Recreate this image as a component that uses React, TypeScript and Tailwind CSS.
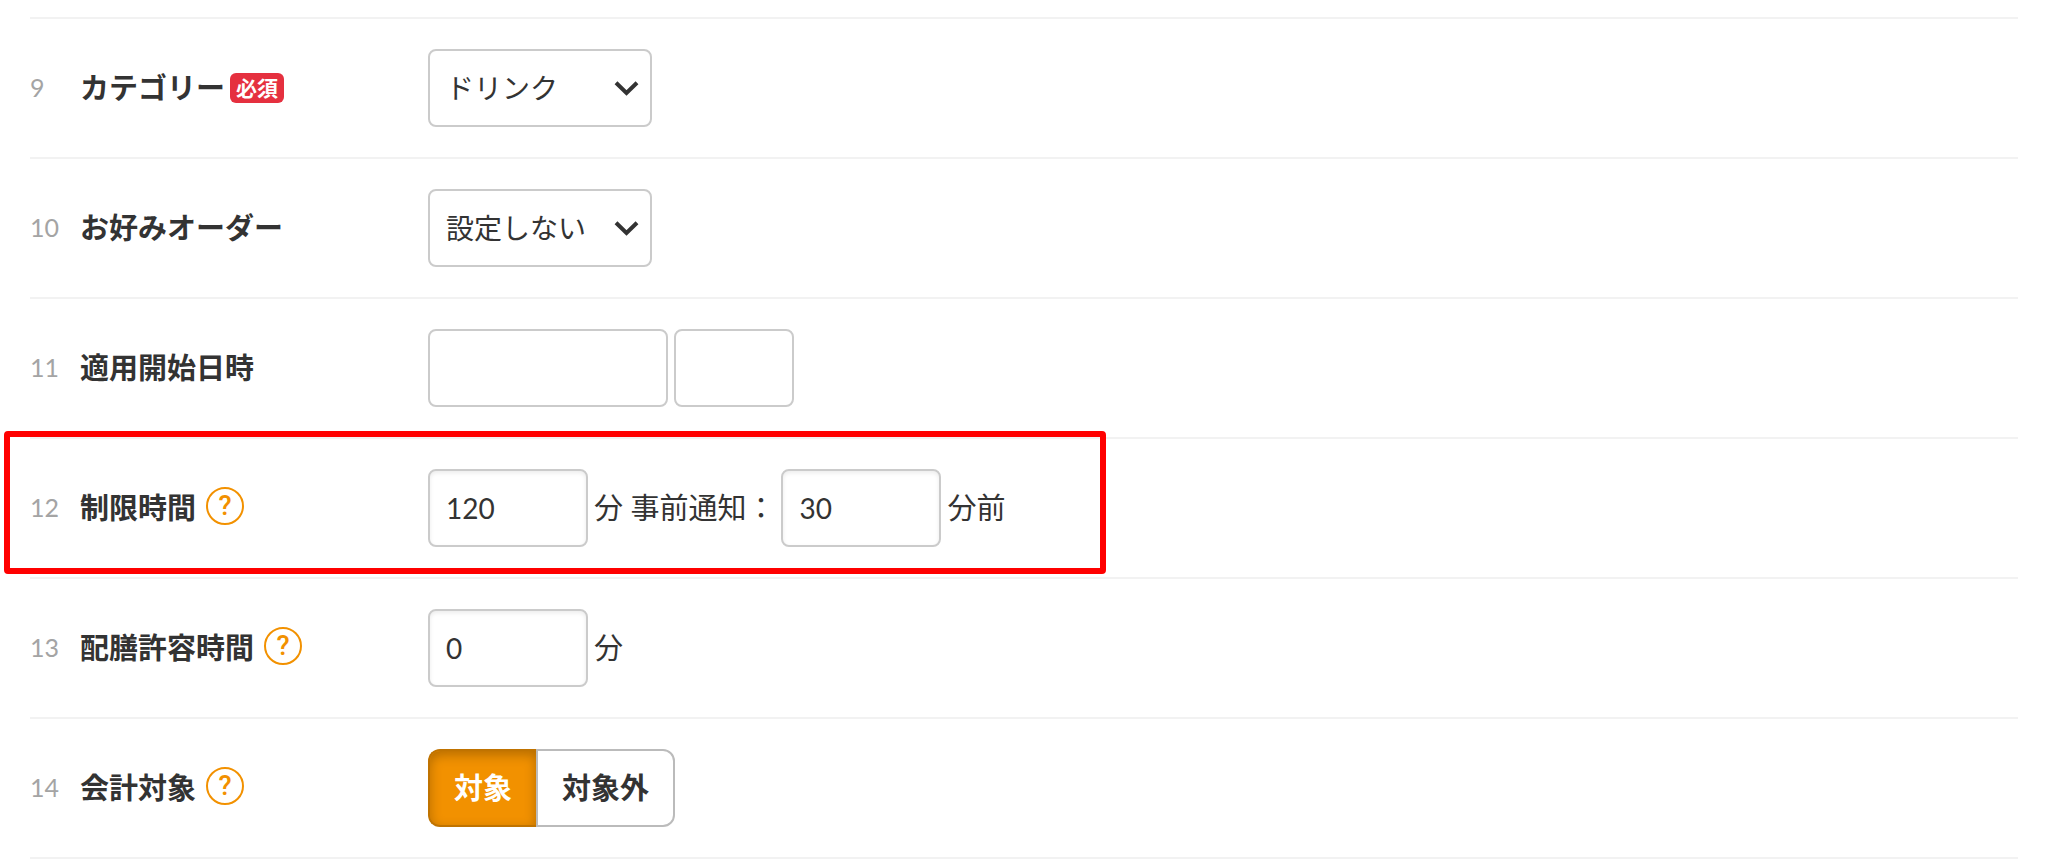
import type { ReactNode } from "react";

const controlBase =
  "h-[78px] rounded-lg border-2 border-[#cbcbcb] bg-white px-4 text-[28px] text-[#333] outline-none";

function HelpButton({ topic }: { topic: string }) {
  return (
    <button
      type="button"
      aria-label={`${topic} ?`}
      className="mb-1 ml-[10px] flex size-[38px] items-center justify-center rounded-full border-2 border-[#f29100] font-[Roboto,sans-serif] text-[27px] leading-none font-medium text-[#f29100]"
    >
      ?
    </button>
  );
}

function Row({
  number,
  label,
  htmlFor,
  required = false,
  help = false,
  highlighted = false,
  children,
}: {
  number: number;
  label: string;
  htmlFor?: string;
  required?: boolean;
  help?: boolean;
  highlighted?: boolean;
  children: ReactNode;
}) {
  return (
    <div className="relative flex items-center border-t-2 border-[#f2f2f2] py-[30px]">
      <span className="w-[50px] shrink-0 text-[25px] text-[#a4a4a4]">{number}</span>
      <div className="flex w-[348px] shrink-0 items-center">
        <label htmlFor={htmlFor} className="text-[29px] font-bold">
          {label}
        </label>
        {required && (
          <span className="ml-[5px] flex h-[30px] items-center rounded-md bg-[#e5303f] px-[6px] text-[21px] font-bold text-white">
            必須
          </span>
        )}
        {help && <HelpButton topic={label} />}
      </div>
      <div className="flex items-center gap-[6px]">{children}</div>
      {highlighted && (
        <div className="pointer-events-none absolute -top-2 -left-[26px] h-[143px] w-[1102px] rounded-sm border-6 border-[#ff0000]" />
      )}
    </div>
  );
}

function Select({ id, options }: { id: string; options: string[] }) {
  return (
    <div className="relative">
      <select id={id} className={`${controlBase} w-56 appearance-none`}>
        {options.map((option) => (
          <option key={option}>{option}</option>
        ))}
      </select>
      <svg
        viewBox="0 0 26 16"
        className="pointer-events-none absolute top-8 right-3 h-4 w-[26px]"
        fill="none"
        stroke="#333"
        strokeWidth="4"
      >
        <path d="M2 1.800L12.500 12L23 1.800" />
      </svg>
    </div>
  );
}

function MinutesInput({ id, value, label }: { id: string; value: string; label?: string }) {
  return (
    <input
      id={id}
      type="text"
      inputMode="numeric"
      aria-label={label}
      defaultValue={value}
      className={`${controlBase} w-40 shadow-[inset_0_2px_4px_rgba(0,0,0,0.08)]`}
    />
  );
}

export default function App() {
  return (
    <form className="px-[30px] pt-[17px] font-[Lato,'Noto_Sans_CJK_JP',sans-serif] text-[29px] text-[#333]" lang="ja">
      <div className="border-b-2 border-[#f2f2f2]">
        <Row number={9} label="カテゴリー" htmlFor="category" required>
          <Select id="category" options={["ドリンク"]} />
        </Row>
        <Row number={10} label="お好みオーダー" htmlFor="custom-order">
          <Select id="custom-order" options={["設定しない"]} />
        </Row>
        <Row number={11} label="適用開始日時" htmlFor="start-date">
          <input id="start-date" type="text" className={`${controlBase} w-60`} />
          <input id="start-time" type="text" aria-label="適用開始日時" className={`${controlBase} w-[120px]`} />
        </Row>
        <Row number={12} label="制限時間" htmlFor="time-limit" help highlighted>
          <MinutesInput id="time-limit" value="120" />
          <label htmlFor="notice">分 事前通知：</label>
          <MinutesInput id="notice" value="30" />
          <span>分前</span>
        </Row>
        <Row number={13} label="配膳許容時間" htmlFor="serving-time" help>
          <MinutesInput id="serving-time" value="0" />
          <span>分</span>
        </Row>
        <Row number={14} label="会計対象" htmlFor="billable" help>
          <div className="flex h-[78px] font-bold">
            <button
              id="billable"
              type="button"
              aria-pressed="true"
              className="rounded-l-xl border-2 border-r-0 border-[#c07300] bg-[#f29100] px-6 text-white shadow-[inset_0_4px_12px_rgba(0,0,0,0.25)]"
            >
              対象
            </button>
            <button
              type="button"
              aria-pressed="false"
              className="rounded-r-xl border-2 border-[#bbb] bg-white px-6"
            >
              対象外
            </button>
          </div>
        </Row>
      </div>
    </form>
  );
}
